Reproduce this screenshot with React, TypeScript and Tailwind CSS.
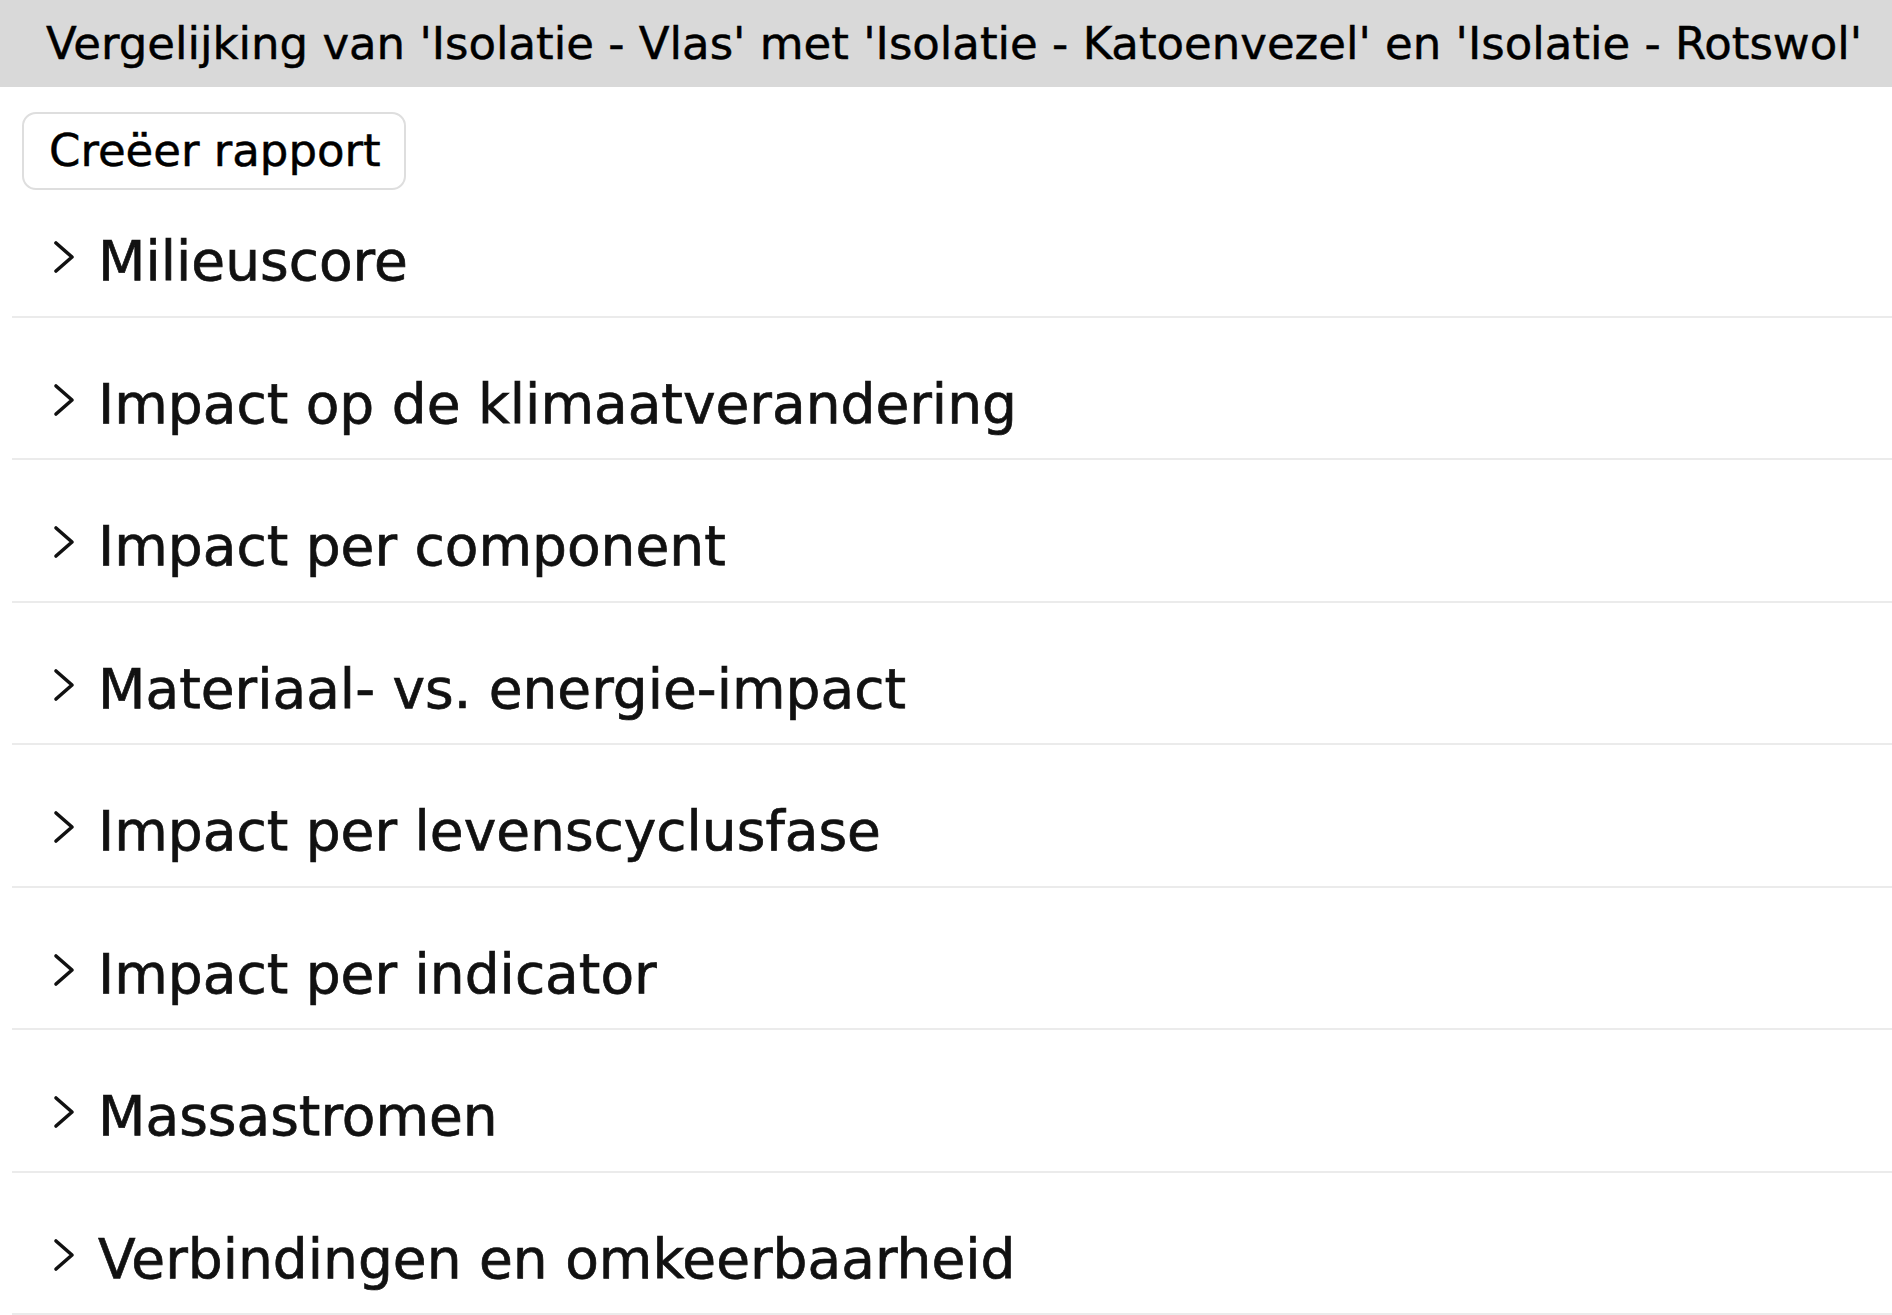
const sections = [
  'Milieuscore',
  'Impact op de klimaatverandering',
  'Impact per component',
  'Materiaal- vs. energie-impact',
  'Impact per levenscyclusfase',
  'Impact per indicator',
  'Massastromen',
  'Verbindingen en omkeerbaarheid',
];

function Chevron() {
  return (
    <svg width="24" height="34" viewBox="0 0 24 34" className="mt-[12px] shrink-0" aria-hidden>
      <polyline points="4,3 20,17 4,31" fill="none" stroke="#111" strokeWidth="3.6" strokeLinecap="round" strokeLinejoin="round" />
    </svg>
  );
}

export default function App() {
  return (
    <div className="min-h-screen bg-white font-['DejaVu_Sans',sans-serif] text-black [-webkit-text-stroke:0.5px]">
      <header className="flex h-[87px] items-center whitespace-nowrap bg-[#d9d9d9] pl-[46px] text-[45px]">
        Vergelijking van 'Isolatie - Vlas' met 'Isolatie - Katoenvezel' en 'Isolatie - Rotswol'
      </header>

      <div className="pl-[22px] pt-[25px]">
        <button
          type="button"
          className="h-[78px] w-[384px] rounded-[14px] border-2 border-[#dedede] bg-white pl-[25px] text-left text-[45px]"
        >
          Creëer rapport
        </button>
      </div>

      <div className="ml-[12px]">
        {sections.map((s) => (
          <div
            key={s}
            className="flex items-start border-b-2 border-[#ebebeb] pb-[21.5px] pt-[53px] first:pt-[38px]"
          >
            <div className="ml-[40px] w-[46px] shrink-0">
              <Chevron />
            </div>
            <span className="text-[55px] leading-[66px] text-[#111] [-webkit-text-stroke:0.7px]">{s}</span>
          </div>
        ))}
      </div>
    </div>
  );
}
